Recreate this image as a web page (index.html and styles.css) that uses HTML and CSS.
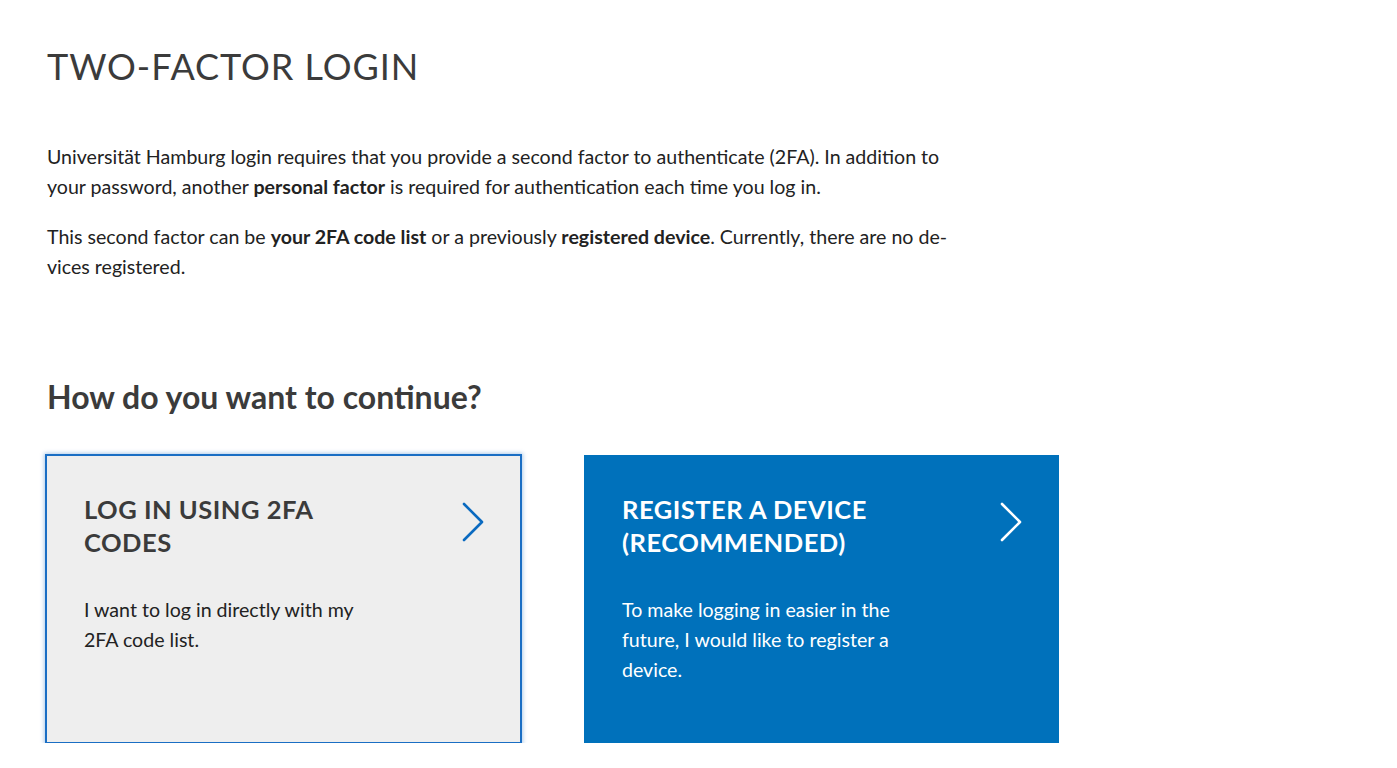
FILE: index.html
```html
<!DOCTYPE html>
<html lang="en">
<head>
<meta charset="utf-8">
<title>Two-factor login</title>
<link rel="stylesheet" href="styles.css">
</head>
<body>
<main class="page">
  <h1 class="title">Two-factor login</h1>
  <section class="intro">
    <p>Universität Hamburg login requires that you provide a second factor to authenticate (2FA). In addition to your password, another <strong>personal factor</strong> is required for authentication each time you log in.</p>
    <p>This second factor can be <strong>your 2FA code list</strong> or a previously <strong>registered device</strong>. Currently, there are no de&shy;vices registered.</p>
  </section>
  <h2 class="question">How do you want to continue?</h2>
  <div class="choices">
    <a class="card card--light" href="#">
      <div class="card-head">
        <h3 class="card-title">Log in using 2FA codes</h3>
        <svg class="chev" width="24" height="40" viewBox="0 0 24 40" aria-hidden="true"><path d="M3 2 L21 20 L3 38" fill="none" stroke="currentColor" stroke-width="2.6" stroke-linecap="round" stroke-linejoin="round"/></svg>
      </div>
      <p class="card-text">I want to log in directly with my 2FA code list.</p>
    </a>
    <a class="card card--blue" href="#">
      <div class="card-head">
        <h3 class="card-title">Register a device (recommended)</h3>
        <svg class="chev" width="24" height="40" viewBox="0 0 24 40" aria-hidden="true"><path d="M3 2 L21 20 L3 38" fill="none" stroke="currentColor" stroke-width="2.6" stroke-linecap="round" stroke-linejoin="round"/></svg>
      </div>
      <p class="card-text">To make logging in easier in the future, I would like to register a device.</p>
    </a>
  </div>
</main>
</body>
</html>
```
FILE: styles.css
```css
html, body {
  margin: 0;
  padding: 0;
  background: #ffffff;
}
body {
  font-family: Lato, "Noto Sans", sans-serif;
  color: #222222;
}
.page {
  padding: 44px 0 0 47px;
}
.title {
  margin: 0;
  font-size: 36px;
  font-weight: 400;
  text-transform: uppercase;
  letter-spacing: 0.95px;
  color: #3b3b3b;
  line-height: 44px;
}
.intro {
  margin-top: 54px;
  max-width: 905px;
}
.intro p {
  margin: 0 0 20px;
  font-size: 19.6px;
  line-height: 30px;
}
.intro strong {
  font-weight: 700;
}
.question {
  margin: 95px 0 0;
  font-size: 32px;
  font-weight: 700;
  color: #3b3b3b;
  line-height: 40px;
}
.choices {
  display: flex;
  gap: 63px;
  margin: 38px 0 0 -1px;
}
.card {
  box-sizing: border-box;
  width: 475px;
  height: 288px;
  padding: 38px 36px 0 38px;
  text-decoration: none;
  display: flex;
  flex-direction: column;
}
.card--light {
  background: #eeeeee;
  color: #222222;
  outline: 2px solid #1a6ec4;
  outline-offset: -1px;
  box-shadow: 0 0 4px 2px rgba(26, 110, 196, 0.35);
}
.card--light .card-title { color: #3b3b3b; }
.card--light .chev { color: #0a6ac0; }
.card--blue {
  background: #0071bb;
  color: #ffffff;
}
.card--blue .card-title { color: #ffffff; }
.card--blue .chev { color: #ffffff; }
.card-head {
  display: flex;
  justify-content: space-between;
  align-items: flex-start;
}
.card-title {
  margin: 0;
  max-width: 270px;
  font-size: 25.5px;
  font-weight: 700;
  text-transform: uppercase;
  letter-spacing: 0.5px;
  line-height: 33px;
}
.chev {
  margin-top: 9px;
  flex: none;
}
.card-text {
  margin: 36px 0 0;
  max-width: 300px;
  font-size: 19.6px;
  line-height: 30px;
}
```
